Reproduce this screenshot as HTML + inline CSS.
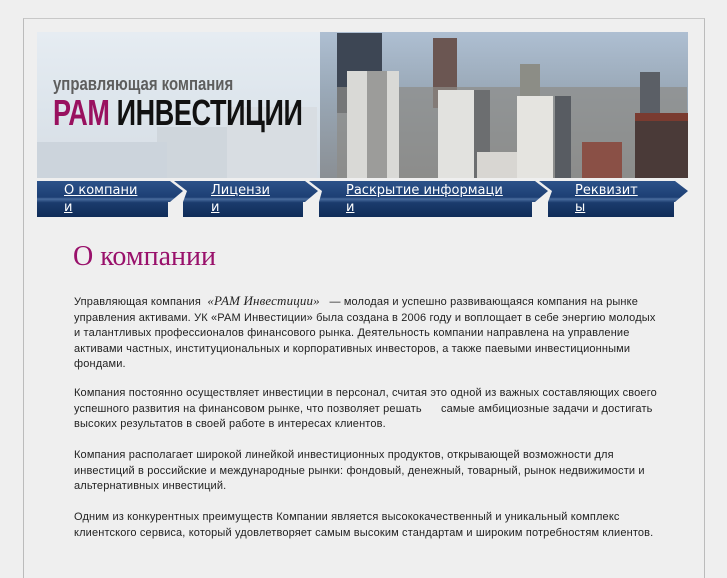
<!DOCTYPE html>
<html><head><meta charset="utf-8"><style>
*{margin:0;padding:0;box-sizing:border-box}
body{width:727px;height:545px;background:#efefef;overflow:hidden;position:relative;font-family:"Liberation Sans",sans-serif}
.frame{position:absolute;left:23px;top:18px;width:682px;height:560px;border-right:1px solid #bbb;border-top:1px solid #c8c8c8;border-left:1px solid #bbb}
.hdr{position:absolute;left:37px;top:32px;width:651px;height:146px;overflow:hidden}
.t1{position:absolute;left:53px;top:74px;font:bold 18px "Liberation Sans",sans-serif;color:#5e5e5e;transform:scaleX(.83);transform-origin:left;white-space:nowrap}
.t2{position:absolute;left:53px;top:92px;font:bold 36px "Liberation Sans",sans-serif;color:#111;transform:scaleX(.75);transform-origin:left;white-space:nowrap;letter-spacing:-0.5px}
.t2 b{color:#99115f}
.nav a{position:absolute;color:#fff;font:13px "DejaVu Sans",sans-serif;text-decoration:underline;line-height:17px;white-space:nowrap}
h1{position:absolute;left:73px;top:241px;font:28px "Liberation Serif",serif;color:#99116b;font-weight:normal}
.txt{position:absolute;left:74px;font-size:11px;color:#222;letter-spacing:0.15px;white-space:nowrap;line-height:15.5px}
</style></head><body>
<div class="frame"></div>
<svg class="hdr" width="651" height="146" viewBox="0 0 651 146">
<defs>
<linearGradient id="sky" x1="0" y1="0" x2="0" y2="1"><stop offset="0" stop-color="#e6ecf2"/><stop offset=".5" stop-color="#dde5ec"/><stop offset="1" stop-color="#d6dde4"/></linearGradient>
<linearGradient id="sky2" x1="0" y1="0" x2="0" y2="1"><stop offset="0" stop-color="#aebfd2"/><stop offset=".4" stop-color="#9aa9b8"/><stop offset="1" stop-color="#8a8f94"/></linearGradient>
</defs>
<rect width="651" height="146" fill="url(#sky)"/>
<rect x="120" y="95" width="160" height="51" fill="#cfd6dc"/>
<rect x="190" y="75" width="90" height="71" fill="#d8dde2"/>
<rect x="0" y="110" width="130" height="36" fill="#ccd4dc"/>
<rect x="283" y="0" width="368" height="146" fill="url(#sky2)"/>
<rect x="300" y="1" width="45" height="80" fill="#3d4654"/>
<rect x="396" y="6" width="24" height="70" fill="#6b5652"/>
<rect x="300" y="55" width="350" height="91" fill="#8d8c88" opacity=".7"/>
<rect x="310" y="39" width="52" height="107" fill="#d9d9d6"/>
<rect x="330" y="39" width="20" height="107" fill="#9c9c9a"/>
<rect x="401" y="58" width="44" height="88" fill="#e2e2df"/>
<rect x="437" y="58" width="16" height="88" fill="#6c6e70"/>
<rect x="483" y="32" width="20" height="40" fill="#8c8d86"/>
<rect x="480" y="64" width="36" height="82" fill="#e5e4e0"/>
<rect x="518" y="64" width="16" height="82" fill="#585c62"/>
<rect x="603" y="40" width="20" height="42" fill="#5b5f66"/>
<rect x="598" y="81" width="53" height="65" fill="#4a3a38"/>
<rect x="598" y="81" width="53" height="8" fill="#7a3b30"/>
<rect x="545" y="110" width="40" height="36" fill="#8a5046"/>
<rect x="440" y="120" width="40" height="26" fill="#d8d6d2"/>
</svg>
<div class="t1">управляющая компания</div>
<div class="t2"><b>РАМ</b> ИНВЕСТИЦИИ</div>
<svg style="position:absolute;left:37px;top:181px" width="651" height="37" viewBox="0 0 651 37">
<defs><linearGradient id="nv2" x1="0" y1="0" x2="0" y2="1"><stop offset="0" stop-color="#2c5289"/><stop offset=".45" stop-color="#1d3f74"/><stop offset=".5" stop-color="#4a6d9e"/><stop offset=".6" stop-color="#1b3b6d"/><stop offset="1" stop-color="#0f2c58"/></linearGradient></defs>
<polygon fill="url(#nv2)" points="0,0 133,0 146,10 133,21 131,21 131,36 0,36"/>
<polygon fill="url(#nv2)" points="137,0 268,0 281,10 268,21 266,21 266,36 146,36 146,21 146,21 150,10"/>
<polygon fill="url(#nv2)" points="272,0 498,0 511,10 498,21 495,21 495,36 282,36 282,21 285,10"/>
<polygon fill="url(#nv2)" points="502,0 638,0 651,10 638,21 637,21 637,36 511,36 511,21 515,10"/>
</svg>
<div class="nav">
<a style="left:64px;top:182px">О компани<br>и</a>
<a style="left:211px;top:182px">Лицензи<br>и</a>
<a style="left:346px;top:182px">Раскрытие информаци<br>и</a>
<a style="left:575px;top:182px">Реквизит<br>ы</a>
</div>
<h1>О компании</h1>
<div class="txt" style="top:293px">Управляющая компания &nbsp;<i style="font-family:'Liberation Serif',serif;font-size:13px">«РАМ Инвестиции»</i> &nbsp; — молодая и успешно развивающаяся компания на рынке<br>управления активами. УК «РАМ Инвестиции» была создана в 2006 году и воплощает в себе энергию молодых<br>и талантливых профессионалов финансового рынка. Деятельность компании направлена на управление<br>активами частных, институциональных и корпоративных инвесторов, а также паевыми инвестиционными<br>фондами.</div>
<div class="txt" style="top:386px">Компания постоянно осуществляет инвестиции в персонал, считая это одной из важных составляющих своего<br>успешного развития на финансовом рынке, что позволяет решать &nbsp; &nbsp; &nbsp;самые амбициозные задачи и достигать<br>высоких результатов в своей работе в интересах клиентов.</div>
<div class="txt" style="top:448px">Компания располагает широкой линейкой инвестиционных продуктов, открывающей возможности для<br>инвестиций в российские и международные рынки: фондовый, денежный, товарный, рынок недвижимости и<br>альтернативных инвестиций.</div>
<div class="txt" style="top:510px">Одним из конкурентных преимуществ Компании является высококачественный и уникальный комплекс<br>клиентского сервиса, который удовлетворяет самым высоким стандартам и широким потребностям клиентов.</div>
</body></html>
